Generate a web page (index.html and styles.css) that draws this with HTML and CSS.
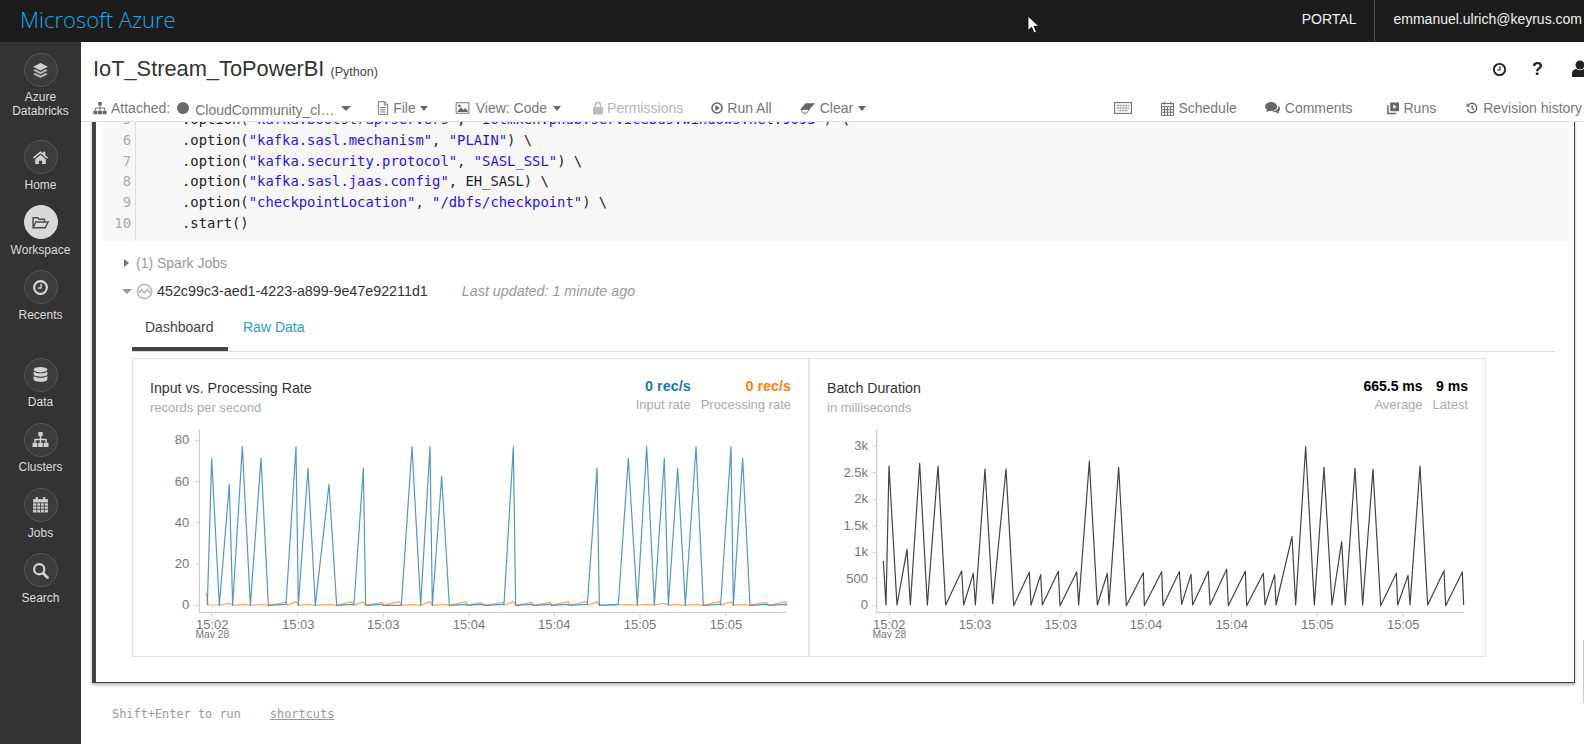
FILE: index.html
```html
<!DOCTYPE html>
<html lang="en">
<head>
<meta charset="utf-8">
<title>IoT_Stream_ToPowerBI - Azure Databricks</title>
<link rel="stylesheet" href="styles.css">
</head>
<body>
<div class="page">
  <header class="topbar">
    <span class="logo">Microsoft Azure</span>
    <nav class="topnav">
      <span class="portal">PORTAL</span>
      <span class="account">emmanuel.ulrich@keyrus.com</span>
    </nav>
  </header>

  <div class="body-row">
    <aside class="sidebar">
      <a class="nav-item nav-brand">
        <span class="nav-circle"><svg class="nav-icon" viewBox="0 0 16 16"><path class="fill-light" d="M8 1 15 4.5 8 8 1 4.5z"/><path class="fill-mid" d="M1 8l2.2-1.1L8 9.3l4.8-2.4L15 8l-7 3.5z"/><path class="fill-mid" d="M1 11.5l2.2-1.1L8 12.8l4.8-2.4 2.2 1.1L8 15z"/></svg></span>
        <span class="nav-label">Azure<br>Databricks</span>
      </a>
      <a class="nav-item">
        <span class="nav-circle"><svg class="nav-icon" viewBox="0 0 16 16"><path class="fill-light" d="M8 2 .8 8l1 1.1L8 4l6.2 5.1 1-1.1-2.7-2.2V2.5h-2v1.6z"/><path class="fill-light" d="M3 9.6 8 5.5l5 4.1V14H9.5v-3h-3v3H3z"/></svg></span>
        <span class="nav-label">Home</span>
      </a>
      <a class="nav-item nav-active">
        <span class="nav-circle"><svg class="nav-icon" viewBox="0 0 16 16"><path class="stroke-dark" d="M1 13V3.5h4.5l1.2 1.5h5V7.5M1 13l2.6-5.5H15.2L12.5 13z"/></svg></span>
        <span class="nav-label">Workspace</span>
      </a>
      <a class="nav-item">
        <span class="nav-circle"><svg class="nav-icon" viewBox="0 0 16 16"><circle class="stroke-light" cx="8" cy="8" r="6"/><path class="stroke-thin" d="M8.5 4.5v4H5.5"/></svg></span>
        <span class="nav-label">Recents</span>
      </a>
      <a class="nav-item nav-gap">
        <span class="nav-circle"><svg class="nav-icon" viewBox="0 0 16 16"><ellipse class="fill-light" cx="8" cy="3.5" rx="6.5" ry="2.5"/><path class="fill-light" d="M1.5 5.2v2.6C1.5 9.2 4.4 10 8 10s6.500-.8 6.500-2.200V5.200C13.400 6.300 10.900 6.900 8 6.900S2.600 6.300 1.500 5.200z"/><path class="fill-light" d="M1.500 9.400v3.100C1.500 13.900 4.400 15 8 15s6.500-1.100 6.500-2.500V9.400C13.400 10.500 10.900 11.100 8 11.100S2.600 10.500 1.500 9.400z"/></svg></span>
        <span class="nav-label">Data</span>
      </a>
      <a class="nav-item">
        <span class="nav-circle"><svg class="nav-icon" viewBox="0 0 16 16"><path class="fill-light" d="M6 1h4v4H6zM0.500 11h4.500v4H.5zM5.800 11h4.400v4H5.800zM11 11h4.500v4H11z"/><path class="stroke-thin" d="M8 5v6M2.800 11V8h10.400v3"/></svg></span>
        <span class="nav-label">Clusters</span>
      </a>
      <a class="nav-item">
        <span class="nav-circle"><svg class="nav-icon" viewBox="0 0 16 16"><path class="fill-light" d="M1 3h14v12.500H1z"/><path class="fill-light" d="M3.500 1h2v3h-2zM10.500 1h2v3h-2z"/><path class="grid-dark" d="M1 6.500h14M1 9.500h14M1 12.500h14M4.500 6v9.500M8 6v9.500M11.500 6v9.500"/></svg></span>
        <span class="nav-label">Jobs</span>
      </a>
      <a class="nav-item">
        <span class="nav-circle"><svg class="nav-icon" viewBox="0 0 16 16"><circle class="stroke-light" cx="6.800" cy="6.800" r="4.800"/><path class="stroke-heavy" d="M10.500 10.500l4 4"/></svg></span>
        <span class="nav-label">Search</span>
      </a>
    </aside>

    <main class="main">
      <div class="nb-header">
        <div class="title-row">
          <h1 class="nb-title">IoT_Stream_ToPowerBI <small class="nb-lang">(Python)</small></h1>
          <div class="title-actions">
            <svg class="act-clock" viewBox="0 0 16 16"><circle class="act-stroke" cx="8" cy="8" r="6"/><path class="act-thin" d="M8.500 4.500v4H5.500"/></svg>
            <span class="act-help">?</span>
            <svg class="act-user" viewBox="0 0 18 18"><circle class="act-fill" cx="9" cy="5" r="4.500"/><path class="act-fill" d="M1 17v-3.500C1 10.500 3.500 9 5.500 9c1 .8 2.200 1.300 3.500 1.300s2.500-.5 3.500-1.300c2 0 4.500 1.500 4.500 4.500V17z"/></svg>
          </div>
        </div>
        <div class="toolbar">
          <span class="tool">
            <svg class="ico ico-14" viewBox="0 0 16 16"><path class="tool-fill" d="M6 1h4v4H6zM0.500 11h4.500v4H.5zM5.800 11h4.400v4H5.800zM11 11h4.500v4H11z"/><path class="tool-line" d="M8 5v6M2.800 11V8h10.400v3"/></svg>
            <span>Attached:</span>
          </span>
          <span class="status-dot"></span>
          <span class="cluster-name">CloudCommunity_cl…</span>
          <span class="caret caret-lg"></span>
          <span class="tool tool-file">
            <svg class="ico ico-12" viewBox="0 0 12 16"><path class="tool-line" d="M.7.700h7l3.600 3.600v11H.7zM7.500.700v3.800h3.800M3 7.500h6M3 10h6M3 12.500h6"/></svg>
            <span>File</span><span class="caret"></span>
          </span>
          <span class="tool tool-view">
            <svg class="ico ico-15" viewBox="0 0 16 16"><rect class="tool-line" x=".7" y="2" width="14.600" height="12"/><path class="tool-fill" d="M2 12.500 6 7l3 3 2-2 3 3v1.500z"/><circle class="tool-fill" cx="4.500" cy="5.500" r="1.500"/></svg>
            <span>View: Code</span><span class="caret"></span>
          </span>
          <span class="tool tool-perm">
            <svg class="ico ico-10" viewBox="0 0 10 14"><path class="lock-arc" d="M2.500 6V4a2.500 2.500 0 0 1 5 0v2"/><rect class="lock-body" y="6" width="10" height="7.500" rx="1"/></svg>
            <span>Permissions</span>
          </span>
          <span class="tool tool-run">
            <svg class="ico ico-12" viewBox="0 0 12 12"><circle class="tool-ring" cx="6" cy="6" r="5"/><path class="tool-fill" d="M4.300 3l4.500 3-4.500 3z"/></svg>
            <span>Run All</span>
          </span>
          <span class="tool tool-clear">
            <svg class="ico ico-15" viewBox="0 0 16 14"><path class="tool-fill" d="M6 2h10L10.500 8H.5z"/><path class="tool-line" d="M.8 8.500h9.500L6.800 12.500H3.500z"/></svg>
            <span>Clear</span><span class="caret"></span>
          </span>
          <span class="tool tool-keys">
            <svg class="ico ico-18" viewBox="0 0 18 12"><rect class="tool-line" x=".6" y=".6" width="16.800" height="10.800"/><path class="key-dots" d="M2.500 3.500h13M2.500 6h13M4.500 8.500h9"/></svg>
          </span>
          <span class="tool tool-schedule">
            <svg class="ico ico-13" viewBox="0 0 14 16"><rect class="tool-line" x=".6" y="2.600" width="12.800" height="12.800"/><path class="tool-line" d="M.6 6h12.800M.6 9h12.800M.6 12h12.800M3.800 6v9.400M7 6v9.400M10.200 6v9.400M3.500.5v3.500M10.500.5v3.500"/></svg>
            <span>Schedule</span>
          </span>
          <span class="tool tool-comments">
            <svg class="ico ico-15" viewBox="0 0 16 14"><ellipse class="tool-fill" cx="6.500" cy="5.500" rx="6.500" ry="4.800"/><path class="tool-fill" d="M2.500 8 1.500 11.500 6 9.500z"/><path class="tool-fill" d="M14.200 4.500c1.200.8 1.800 2 1.800 3.300 0 1.300-.6 2.300-1.700 3.100l.9 2.100-3.200-1.400c-1.700.2-3.300-.2-4.500-1.100 3.800.1 7.300-2.200 6.700-6z"/></svg>
            <span>Comments</span>
          </span>
          <span class="tool tool-runs">
            <svg class="ico ico-12" viewBox="0 0 13 14"><path class="tool-fill" d="M3.500 1H13v9.500H3.500z"/><path class="play-cut" d="M6.800 3.300l3.600 2.400-3.600 2.400z"/><path class="tool-ring" d="M1 4v9h9"/></svg>
            <span>Runs</span>
          </span>
          <span class="tool tool-revision">
            <svg class="ico ico-12" viewBox="0 0 14 14"><path class="tool-ring" d="M3 3.200A5.500 5.500 0 1 1 1.700 8.500"/><path class="tool-fill" d="M.6 1.200v4.200h4.200z"/><path class="tool-ring" d="M7.200 4v3.500l2.300 1.400"/></svg>
            <span>Revision history</span>
          </span>
        </div>
      </div>

      <div class="viewport">
        <section class="cell">
          <div class="code">
            <div class="gutter"><div>5</div><div>6</div><div>7</div><div>8</div><div>9</div><div>10</div></div>
            <pre class="source"><code>    .option(<i>"kafka.bootstrap.servers"</i>, <i>"iotmxeh:phub.servicebus.windows.net:9093"</i>) \
    .option(<i>"kafka.sasl.mechanism"</i>, <i>"PLAIN"</i>) \
    .option(<i>"kafka.security.protocol"</i>, <i>"SASL_SSL"</i>) \
    .option(<i>"kafka.sasl.jaas.config"</i>, EH_SASL) \
    .option(<i>"checkpointLocation"</i>, <i>"/dbfs/checkpoint"</i>) \
    .start()</code></pre>
          </div>

          <div class="results">
            <div class="job-row job-row-first">
              <span class="tri-right"></span>
              <span class="spark-jobs">(1) Spark Jobs</span>
            </div>
            <div class="job-row">
              <span class="tri-down"></span>
              <svg class="stream-ico" viewBox="0 0 18 18"><circle class="stream-ring" cx="9" cy="9" r="7.500"/><path class="stream-ring" d="M3 10.500 6 7l3 3.500L12 7l3 3.500"/></svg>
              <span class="stream-id">452c99c3-aed1-4223-a899-9e47e92211d1</span>
              <em class="stream-time">Last updated: 1 minute ago</em>
            </div>

            <div class="tabs">
              <span class="tab tab-active">Dashboard</span>
              <span class="tab tab-link">Raw Data</span>
            </div>

            <div class="panels">
              <article class="panel">
                <div class="panel-head">
                  <div class="panel-title">
                    <div class="title-main">Input vs. Processing Rate</div>
                    <div class="title-sub">records per second</div>
                  </div>
                  <div class="stats">
                    <div class="stat"><b class="val-blue">0 rec/s</b><span>Input rate</span></div>
                    <div class="stat"><b class="val-orange">0 rec/s</b><span>Processing rate</span></div>
                  </div>
                </div>
                <svg class="chart chart-a" viewBox="9 165 2025 720">
                  <defs><clipPath id="dateA"><rect x="180" y="805" width="140" height="29"/></clipPath></defs>
                  <path class="axis" d="M208 207V757H1968"/>
                  <path class="tick" d="M196 241h12M196 365h12M196 488h12M196 612h12M196 736h12M245 757v13M502 757v13M760 757v13M1017 757v13M1273 757v13M1530 757v13M1788 757v13"/>
                  <g class="ylab">
                    <text x="178" y="253">80</text><text x="178" y="377">60</text><text x="178" y="500">40</text><text x="178" y="624">20</text><text x="178" y="748">0</text>
                  </g>
                  <g class="xlab">
                    <text x="247" y="808">15:02</text><text x="505" y="808">15:03</text><text x="760" y="808">15:03</text><text x="1017" y="808">15:04</text><text x="1273" y="808">15:04</text><text x="1530" y="808">15:05</text><text x="1788" y="808">15:05</text>
                  </g>
                  <text class="xdate" x="247" y="835" clip-path="url(#dateA)">May 28</text>
                  <polyline class="line-orange" points="228,698 235,735 268,735 298,730 308,736 337,733 361,736 393,733 415,736 468,727 472,736 498,725 505,736 534,733 556,736 597,733 620,736 665,725 672,736 700,725 707,736 757,727 760,736 808,725 814,736 846,733 872,736 900,725 907,736 935,733 958,736 1008,725 1013,736 1050,728 1068,736 1118,727 1122,736 1150,725 1157,736 1205,727 1210,736 1260,727 1265,736 1315,725 1318,736 1370,725 1375,736 1401,725 1408,736 1465,735 1495,733 1522,735 1550,733 1573,735 1603,730 1615,736 1643,733 1666,736 1698,733 1720,736 1768,725 1772,736 1803,725 1810,736 1838,733 1860,736 1908,727 1916,736 1968,725 1970,736"/>
                  <polyline class="line-blue" points="232,736 245,295 268,736 298,373 308,736 337,260 361,736 393,295 415,736 468,733 498,260 505,736 534,325 556,736 597,373 620,736 672,733 700,325 707,736 757,733 760,736 814,736 846,260 872,736 900,260 907,736 935,350 958,736 1010,733 1013,736 1050,733 1068,736 1122,733 1150,260 1157,736 1207,733 1210,736 1262,733 1265,736 1315,733 1318,736 1372,733 1401,325 1408,736 1465,733 1495,295 1522,736 1550,260 1573,736 1603,295 1615,736 1643,325 1666,736 1698,260 1720,736 1772,733 1803,260 1810,736 1838,295 1860,736 1912,733 1916,736 1968,733 1970,736"/>
                </svg>
              </article>

              <article class="panel panel-b">
                <div class="panel-head">
                  <div class="panel-title">
                    <div class="title-main">Batch Duration</div>
                    <div class="title-sub">in milliseconds</div>
                  </div>
                  <div class="stats">
                    <div class="stat"><b class="val-black">665.5 ms</b><span>Average</span></div>
                    <div class="stat"><b class="val-black">9 ms</b><span>Latest</span></div>
                  </div>
                </div>
                <svg class="chart chart-b" viewBox="30 165 2025 720">
                  <defs><clipPath id="dateB"><rect x="200" y="805" width="140" height="29"/></clipPath></defs>
                  <path class="axis" d="M230 207V757H1992"/>
                  <path class="tick" d="M218 257h12M218 338h12M218 418h12M218 497h12M218 577h12M218 656h12M218 736h12M268 757v13M525 757v13M782 757v13M1038 757v13M1295 757v13M1552 757v13M1810 757v13"/>
                  <g class="ylab">
                    <text x="204" y="269">3k</text><text x="204" y="350">2.5k</text><text x="204" y="430">2k</text><text x="204" y="509">1.5k</text><text x="204" y="589">1k</text><text x="204" y="668">500</text><text x="204" y="748">0</text>
                  </g>
                  <g class="xlab">
                    <text x="268" y="808">15:02</text><text x="525" y="808">15:03</text><text x="782" y="808">15:03</text><text x="1038" y="808">15:04</text><text x="1295" y="808">15:04</text><text x="1552" y="808">15:05</text><text x="1810" y="808">15:05</text>
                  </g>
                  <text class="xdate" x="268" y="835" clip-path="url(#dateB)">May 28</text>
                  <polyline class="line-dark" points="250,603 258,735 267,318 291,735 321,568 331,735 359,310 382,735 414,318 437,735 485,633 491,735 520,640 526,735 555,327 578,731 618,327 641,737 688,637 693,735 722,644 727,735 775,634 780,737 830,636 836,735 868,304 892,735 922,640 927,735 956,322 979,737 1030,638 1033,737 1085,635 1089,737 1138,635 1145,733 1173,643 1178,735 1225,634 1230,735 1280,628 1285,737 1336,634 1340,737 1390,640 1395,735 1424,644 1428,735 1476,530 1487,735 1517,260 1543,735 1572,322 1596,735 1625,545 1636,735 1665,325 1688,735 1719,328 1742,737 1789,640 1793,735 1824,646 1830,735 1860,318 1883,735 1932,632 1937,737 1987,636 1991,735"/>
                </svg>
              </article>
            </div>
          </div>
        </section>

        <footer class="hint">
          <span>Shift+Enter to run</span>
          <a class="hint-link">shortcuts</a>
        </footer>
      </div>
    </main>
  </div>

  <span class="scroll-thumb"></span>
  <svg class="cursor" viewBox="0 0 12 19"><path class="cursor-arrow" d="M1 1v14.500l3.500-3.300L7 18l2.500-1-2.500-5.700h4.800z"/></svg>
</div>
</body>
</html>
```

FILE: styles.css
```css
* { box-sizing: border-box; }
html, body { margin: 0; height: 100%; }
body {
  font-family: "Liberation Sans", Arial, sans-serif;
  background: #fff;
  color: #333;
  overflow: hidden;
}
.page {
  position: relative;
  width: 1584px;
  height: 744px;
  overflow: hidden;
  display: flex;
  flex-direction: column;
}

/* top bar */
.topbar {
  flex: none;
  height: 42px;
  background: #1c1c1c;
  display: flex;
  align-items: stretch;
  justify-content: space-between;
}
.logo {
  font-family: "Open Sans", "Liberation Sans", sans-serif;
  font-weight: 300;
  font-size: 22px;
  line-height: 38px;
  color: #14aaee;
  padding-left: 20px;
}
.topnav { display: flex; align-items: stretch; font-size: 14px; color: #f0f0f0; line-height: 38px; }
.portal { padding-right: 17px; border-right: 1px solid #4a4a4a; }
.account { padding: 0 2px 0 19px; }

.body-row { flex: 1; display: flex; min-height: 0; }

/* sidebar */
.sidebar {
  flex: none;
  width: 81px;
  background: #333;
  padding-top: 11px;
  display: flex;
  flex-direction: column;
  align-items: center;
}
.nav-item {
  display: flex;
  flex-direction: column;
  align-items: center;
  width: 100%;
  margin-bottom: 13.5px;
  color: #dcdcdc;
  font-size: 12px;
  line-height: 13px;
  text-align: center;
}
.nav-brand { margin-bottom: 22px; }
.nav-brand .nav-label { margin-top: 4px; line-height: 13.5px; }
.nav-gap { margin-top: 22px; }
.nav-circle {
  width: 34px;
  height: 34px;
  border-radius: 50%;
  background: #3c3c3c;
  border: 1px solid #565656;
  display: flex;
  align-items: center;
  justify-content: center;
}
.nav-label { margin-top: 4.7px; }
.nav-active .nav-circle { background: #d9d9d9; border-color: #d9d9d9; }
.nav-icon { width: 17px; height: 17px; }
.fill-light { fill: #d0d0d0; }
.fill-mid { fill: #b4b4b4; }
.stroke-dark { fill: none; stroke: #4a4a4a; stroke-width: 1.3; }
.stroke-light { fill: none; stroke: #d8d8d8; stroke-width: 2; }
.stroke-thin { fill: none; stroke: #d8d8d8; stroke-width: 1.3; }
.stroke-heavy { fill: none; stroke: #d8d8d8; stroke-width: 2.6; stroke-linecap: round; }
.grid-dark { fill: none; stroke: #3c3c3c; stroke-width: .8; }

/* notebook header */
.main { flex: 1; min-width: 0; display: flex; flex-direction: column; }
.nb-header { flex: none; height: 80px; border-bottom: 1px solid #e2e2e2; }
.title-row {
  height: 50px;
  padding: 6px 0 0 12px;
  display: flex;
  align-items: center;
  justify-content: space-between;
}
.nb-title { margin: 0; font-size: 21.8px; font-weight: 400; color: #333; line-height: 26px; }
.nb-lang { font-size: 12.6px; color: #444; }
.title-actions { display: flex; align-items: center; width: 101px; flex: none; margin: -2px -6px 0 0; }
.act-clock { width: 15px; height: 15px; margin-left: 3px; }
.act-stroke { fill: none; stroke: #222; stroke-width: 2; }
.act-thin { fill: none; stroke: #222; stroke-width: 1.2; }
.act-help { font-weight: 700; font-size: 18px; color: #222; margin-left: 25px; width: 10px; }
.act-user { width: 18px; height: 18px; margin-left: 29px; flex: none; }
.act-fill { fill: #222; }

.toolbar {
  height: 29px;
  padding: 3px 0 0 12px;
  display: flex;
  align-items: center;
  font-size: 14px;
  color: #777;
  white-space: nowrap;
}
.tool { display: inline-flex; align-items: center; gap: 4px; flex: none; }
.ico { display: block; flex: none; }
.ico-10 { width: 10px; height: 14px; }
.ico-12 { width: 12px; height: 14px; }
.ico-13 { width: 13px; height: 15px; }
.ico-14 { width: 14px; height: 14px; }
.ico-15 { width: 15px; height: 14px; }
.ico-18 { width: 18px; height: 12px; }
.tool-fill { fill: #666; }
.tool-line { fill: none; stroke: #666; stroke-width: 1; }
.tool-ring { fill: none; stroke: #666; stroke-width: 1.6; }
.key-dots { fill: none; stroke: #888; stroke-width: 1.3; stroke-dasharray: 1 .6; }
.play-cut { fill: #fff; }
.lock-arc { fill: none; stroke: #bbb; stroke-width: 1.5; }
.lock-body { fill: #bbb; }
.status-dot {
  width: 12px;
  height: 12px;
  border-radius: 50%;
  background: #6a6a6a;
  margin-left: 7px;
  flex: none;
}
.cluster-name { margin: 4px 0 0 6px; width: 138px; flex: none; }
.caret {
  width: 0;
  height: 0;
  border-left: 4px solid transparent;
  border-right: 4px solid transparent;
  border-top: 5px solid #666;
  flex: none;
}
.caret-lg { border-left-width: 5px; border-right-width: 5px; margin-left: 8px; }
.tool-file { margin-left: 26px; }
.tool-view { margin-left: 27px; gap: 6px; }
.tool-perm { margin-left: 32px; color: #b5b5b5; gap: 4px; }
.tool-run { margin-left: 28px; }
.tool-clear { margin-left: 28px; gap: 5px; }
.tool-keys { margin-left: auto; }
.tool-schedule { margin-left: 29px; gap: 4px; }
.tool-comments { margin-left: 28px; gap: 5px; }
.tool-runs { margin-left: 35px; }
.tool-revision { margin-left: 30px; margin-right: 2px; gap: 5px; }

/* scroll area */
.viewport { flex: 1; min-height: 0; overflow: hidden; padding-bottom: 8px; }
.cell {
  margin: -13px 9px 0 11px;
  border-left: 4px solid #444;
  border-right: 1px solid #444;
  border-bottom: 1px solid #444;
  padding: 0 6px 25px;
  box-shadow: 0 2px 3px rgba(0, 0, 0, .3);
}
.code {
  display: flex;
  background: #f7f7f7;
  border-radius: 3px;
  font-family: "DejaVu Sans Mono", "Liberation Mono", monospace;
  font-size: 13.85px;
  line-height: 20.75px;
}
.gutter {
  flex: none;
  width: 34px;
  border-right: 1px solid #ddd;
  padding-right: 4px;
  padding-bottom: 7.5px;
  text-align: right;
  color: #aaa;
}
.source { margin: 0; padding: 0 0 7.5px 12.7px; font: inherit; color: #222; }
.source code { font: inherit; }
.source i { font-style: normal; color: #2a10f0; }

.results { padding: 0 13px 0 20px; }
.job-row { display: flex; align-items: center; height: 24px; margin-top: 4px; font-size: 14.3px; }
.job-row-first { margin-top: 10px; font-size: 14px; }
.tri-right {
  width: 0;
  height: 0;
  border-top: 4.5px solid transparent;
  border-bottom: 4.5px solid transparent;
  border-left: 5px solid #777;
  margin-left: 2px;
}
.spark-jobs { margin-left: 7px; color: #999; }
.tri-down {
  width: 0;
  height: 0;
  border-left: 5px solid transparent;
  border-right: 5px solid transparent;
  border-top: 5px solid #999;
}
.stream-ico { width: 17px; height: 17px; margin-left: 4px; flex: none; }
.stream-ring { fill: none; stroke: #bbb; stroke-width: 1.8; }
.stream-id { margin-left: 4px; color: #333; }
.stream-time { margin-left: 34px; color: #999; }

.tabs {
  display: flex;
  height: 47px;
  margin: 2px 0 0 10px;
  border-bottom: 1px solid #ddd;
  font-size: 14px;
}
.tab { height: 46px; line-height: 44px; }
.tab-active { width: 96px; padding-left: 13px; color: #444; border-bottom: 4px solid #444; }
.tab-link { margin-left: 15px; color: #2aa0c8; }

.panels {
  display: grid;
  grid-template-columns: 677px 677px;
  height: 299px;
  margin: 6px 0 0 10px;
}
.panel { border: 1px solid #e4e4e4; height: 299px; }
.panel-head {
  height: 56px;
  padding: 19px 17px 0 17px;
  display: flex;
  justify-content: space-between;
  align-items: flex-start;
}
.panel-title { padding-top: 2px; }
.title-main { font-size: 14.2px; line-height: 16px; color: #333; }
.title-sub { font-size: 13px; line-height: 15px; margin-top: 4px; color: #aaa; }
.stats { display: flex; gap: 10px; text-align: right; }
.stat { display: flex; flex-direction: column; align-items: flex-end; font-size: 13px; line-height: 15px; color: #aaa; }
.stat b { font-size: 14.4px; line-height: 16px; margin-bottom: 3px; }
.val-blue { color: #1f77b4; }
.val-orange { color: #ff7f0e; }
.val-black { color: #000; }
.panel-b .stat b { font-size: 14px; }

.chart { display: block; width: 675px; height: 240px; }
.axis { fill: none; stroke: #c4c4c4; stroke-width: 3; }
.tick { fill: none; stroke: #d0d0d0; stroke-width: 3; }
.ylab text { font-size: 39px; fill: #777; text-anchor: end; }
.xlab text { font-size: 39px; fill: #777; text-anchor: middle; }
.xdate { font-size: 31px; fill: #777; text-anchor: middle; }
.line-blue { fill: none; stroke: #3f8dc0; stroke-width: 3.6; stroke-linejoin: round; opacity: .9; }
.line-orange { fill: none; stroke: #ff9d4f; stroke-width: 3.6; stroke-linejoin: round; opacity: .9; }
.line-dark { fill: none; stroke: #444; stroke-width: 3.6; stroke-linejoin: round; }

/* footer hint */
.hint {
  margin: 23px 0 0 31px;
  display: flex;
  gap: 29px;
  font-family: "DejaVu Sans Mono", "Liberation Mono", monospace;
  font-size: 11.9px;
  line-height: 16px;
  color: #999;
}
.hint-link { text-decoration: underline; }

/* overlays */
.scroll-thumb { position: absolute; left: 1583px; top: 640px; width: 1px; height: 63px; background: #ccc; }
.cursor { position: absolute; left: 1027px; top: 15px; width: 12px; height: 19px; }
.cursor-arrow { fill: #fff; stroke: #000; stroke-width: .8; }
```
